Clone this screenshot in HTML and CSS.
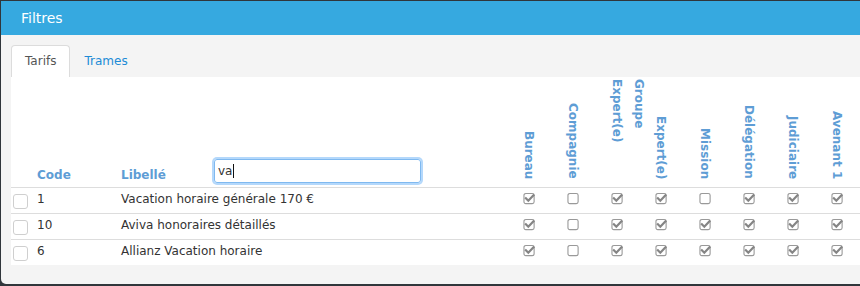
FILE: index.html
```html
<!DOCTYPE html>
<html lang="fr">
<head>
<meta charset="utf-8">
<title>Filtres</title>
<link rel="stylesheet" href="styles.css">
</head>
<body>
<div class="modal">
  <div class="modal-header">Filtres</div>
  <div class="modal-body">
    <div class="tabs">
      <div class="tab active">Tarifs</div>
      <div class="tab">Trames</div>
    </div>
    <div class="tab-content">
      <table class="grid">
        <colgroup>
          <col class="c-sel"><col class="c-code"><col class="c-lib">
          <col class="c-chk"><col class="c-chk"><col class="c-chk"><col class="c-chk">
          <col class="c-chk"><col class="c-chk"><col class="c-chk"><col class="c-chk">
          <col>
        </colgroup>
        <thead>
          <tr>
            <th></th>
            <th class="h-text">Code</th>
            <th class="h-lib">
              <div class="lib-wrap">
                <span class="lib-label">Libellé</span>
                <div class="search" role="textbox">va<span class="caret"></span></div>
              </div>
            </th>
            <th class="vcol"><div class="vlabel">Bureau</div></th>
            <th class="vcol"><div class="vlabel">Compagnie</div></th>
            <th class="vcol"><div class="vlabel wrap">Groupe Expert(e)</div></th>
            <th class="vcol"><div class="vlabel">Expert(e)</div></th>
            <th class="vcol"><div class="vlabel">Mission</div></th>
            <th class="vcol"><div class="vlabel">Délégation</div></th>
            <th class="vcol"><div class="vlabel">Judiciaire</div></th>
            <th class="vcol"><div class="vlabel">Avenant 1</div></th>
            <th></th>
          </tr>
        </thead>
        <tbody>
          <tr>
            <td class="sel"><span class="selbox"></span></td>
            <td>1</td>
            <td>Vacation horaire générale 170 €</td>
            <td class="chk"><svg class="cb" viewBox="0 0 13 13"><rect x="0.5" y="0.5" width="11" height="11" rx="2"/><path d="M2.6 5.8 L5.2 8.4 L10.8 2.4"/></svg></td>
            <td class="chk"><svg class="cb" viewBox="0 0 13 13"><rect x="0.5" y="0.5" width="11" height="11" rx="2"/></svg></td>
            <td class="chk"><svg class="cb" viewBox="0 0 13 13"><rect x="0.5" y="0.5" width="11" height="11" rx="2"/><path d="M2.6 5.8 L5.2 8.4 L10.8 2.4"/></svg></td>
            <td class="chk"><svg class="cb" viewBox="0 0 13 13"><rect x="0.5" y="0.5" width="11" height="11" rx="2"/><path d="M2.6 5.8 L5.2 8.4 L10.8 2.4"/></svg></td>
            <td class="chk"><svg class="cb" viewBox="0 0 13 13"><rect x="0.5" y="0.5" width="11" height="11" rx="2"/></svg></td>
            <td class="chk"><svg class="cb" viewBox="0 0 13 13"><rect x="0.5" y="0.5" width="11" height="11" rx="2"/><path d="M2.6 5.8 L5.2 8.4 L10.8 2.4"/></svg></td>
            <td class="chk"><svg class="cb" viewBox="0 0 13 13"><rect x="0.5" y="0.5" width="11" height="11" rx="2"/><path d="M2.6 5.8 L5.2 8.4 L10.8 2.4"/></svg></td>
            <td class="chk"><svg class="cb" viewBox="0 0 13 13"><rect x="0.5" y="0.5" width="11" height="11" rx="2"/><path d="M2.6 5.8 L5.2 8.4 L10.8 2.4"/></svg></td>
            <td></td>
          </tr>
          <tr>
            <td class="sel"><span class="selbox"></span></td>
            <td>10</td>
            <td>Aviva honoraires détaillés</td>
            <td class="chk"><svg class="cb" viewBox="0 0 13 13"><rect x="0.5" y="0.5" width="11" height="11" rx="2"/><path d="M2.6 5.8 L5.2 8.4 L10.8 2.4"/></svg></td>
            <td class="chk"><svg class="cb" viewBox="0 0 13 13"><rect x="0.5" y="0.5" width="11" height="11" rx="2"/></svg></td>
            <td class="chk"><svg class="cb" viewBox="0 0 13 13"><rect x="0.5" y="0.5" width="11" height="11" rx="2"/><path d="M2.6 5.8 L5.2 8.4 L10.8 2.4"/></svg></td>
            <td class="chk"><svg class="cb" viewBox="0 0 13 13"><rect x="0.5" y="0.5" width="11" height="11" rx="2"/><path d="M2.6 5.8 L5.2 8.4 L10.8 2.4"/></svg></td>
            <td class="chk"><svg class="cb" viewBox="0 0 13 13"><rect x="0.5" y="0.5" width="11" height="11" rx="2"/><path d="M2.6 5.8 L5.2 8.4 L10.8 2.4"/></svg></td>
            <td class="chk"><svg class="cb" viewBox="0 0 13 13"><rect x="0.5" y="0.5" width="11" height="11" rx="2"/><path d="M2.6 5.8 L5.2 8.4 L10.8 2.4"/></svg></td>
            <td class="chk"><svg class="cb" viewBox="0 0 13 13"><rect x="0.5" y="0.5" width="11" height="11" rx="2"/><path d="M2.6 5.8 L5.2 8.4 L10.8 2.4"/></svg></td>
            <td class="chk"><svg class="cb" viewBox="0 0 13 13"><rect x="0.5" y="0.5" width="11" height="11" rx="2"/><path d="M2.6 5.8 L5.2 8.4 L10.8 2.4"/></svg></td>
            <td></td>
          </tr>
          <tr class="last">
            <td class="sel"><span class="selbox"></span></td>
            <td>6</td>
            <td>Allianz Vacation horaire</td>
            <td class="chk"><svg class="cb" viewBox="0 0 13 13"><rect x="0.5" y="0.5" width="11" height="11" rx="2"/><path d="M2.6 5.8 L5.2 8.4 L10.8 2.4"/></svg></td>
            <td class="chk"><svg class="cb" viewBox="0 0 13 13"><rect x="0.5" y="0.5" width="11" height="11" rx="2"/></svg></td>
            <td class="chk"><svg class="cb" viewBox="0 0 13 13"><rect x="0.5" y="0.5" width="11" height="11" rx="2"/><path d="M2.6 5.8 L5.2 8.4 L10.8 2.4"/></svg></td>
            <td class="chk"><svg class="cb" viewBox="0 0 13 13"><rect x="0.5" y="0.5" width="11" height="11" rx="2"/><path d="M2.6 5.8 L5.2 8.4 L10.8 2.4"/></svg></td>
            <td class="chk"><svg class="cb" viewBox="0 0 13 13"><rect x="0.5" y="0.5" width="11" height="11" rx="2"/><path d="M2.6 5.8 L5.2 8.4 L10.8 2.4"/></svg></td>
            <td class="chk"><svg class="cb" viewBox="0 0 13 13"><rect x="0.5" y="0.5" width="11" height="11" rx="2"/><path d="M2.6 5.8 L5.2 8.4 L10.8 2.4"/></svg></td>
            <td class="chk"><svg class="cb" viewBox="0 0 13 13"><rect x="0.5" y="0.5" width="11" height="11" rx="2"/><path d="M2.6 5.8 L5.2 8.4 L10.8 2.4"/></svg></td>
            <td class="chk"><svg class="cb" viewBox="0 0 13 13"><rect x="0.5" y="0.5" width="11" height="11" rx="2"/><path d="M2.6 5.8 L5.2 8.4 L10.8 2.4"/></svg></td>
            <td></td>
          </tr>
        </tbody>
      </table>
    </div>
  </div>
</div>
</body>
</html>
```
FILE: styles.css
```css
html, body {
  margin: 0;
  padding: 0;
}
body {
  background: #30363b;
  overflow: hidden;
  font-family: "DejaVu Sans", "Liberation Sans", sans-serif;
  font-size: 12px;
  color: #333;
  height: 286px;
}
.modal {
  margin: 1px 0 0 1px;
  width: 900px;
  background: #f4f4f4;
  border-radius: 0 0 5px 5px;
  overflow: hidden;
}
.modal-header {
  height: 34px;
  line-height: 34px;
  padding-left: 20px;
  background: #36a9e0;
  color: #fff;
  font-size: 14px;
}
.modal-body {
  padding: 10px 10px 19px 10px;
}
.tabs {
  display: flex;
  height: 32px;
}
.tab {
  padding: 0 13px;
  line-height: 31px;
  border: 1px solid transparent;
  border-bottom: none;
  border-radius: 4px 4px 0 0;
  color: #208bd6;
}
.tab.active {
  background: #fff;
  border-color: #dcdcdc;
  color: #555;
}
.tab-content {
  background: #fff;
}
.grid {
  width: 100%;
  table-layout: fixed;
  border-collapse: separate;
  border-spacing: 0;
}
.c-sel { width: 22px; }
.c-code { width: 84px; }
.c-lib { width: 390px; }
.c-chk { width: 44px; }

.grid th {
  padding: 0;
  vertical-align: bottom;
  text-align: left;
  font-weight: bold;
  color: #5e9dd5;
  border-bottom: 1px solid #ddd;
}
.grid th.h-text {
  padding: 0 4px 4px;
  line-height: 16px;
}
.lib-wrap {
  display: flex;
  align-items: flex-end;
  padding: 0 0 4px 4px;
}
.lib-label {
  flex: 0 0 93px;
  line-height: 16px;
}
.search {
  box-sizing: border-box;
  width: 207px;
  height: 24px;
  padding-left: 3px;
  border: 1px solid #7fb9f0;
  border-radius: 3px;
  box-shadow: 0 0 0 2px #b4d8fb;
  font-weight: normal;
  color: #333;
  line-height: 22px;
  display: flex;
  align-items: center;
}
.caret {
  display: inline-block;
  width: 1px;
  height: 14px;
  margin-left: 1px;
  background: #111;
}
.vlabel {
  writing-mode: vertical-rl;
  height: 100px;
  padding: 2px 0 8px;
  line-height: 22px;
  text-align: end;
  margin: 0 auto;
}
.vlabel.wrap {
  text-align: start;
  margin: 0 0 0 11px;
}
.grid td {
  padding: 3px 4px 5px;
  line-height: 17px;
  border-bottom: 1px solid #ddd;
  white-space: nowrap;
  vertical-align: top;
}
.grid tr.last td {
  border-bottom: none;
}
.grid td.sel {
  padding: 6px 0 4px 2px;
}
.selbox {
  display: block;
  width: 13px;
  height: 13px;
  border: 1px solid #cfcfcf;
  border-radius: 3px;
}
.grid td.chk {
  padding: 5px 0 8px;
}
.cb {
  display: block;
  width: 13px;
  height: 12px;
  margin: 0 auto;
  overflow: visible;
}
.cb rect {
  fill: #fff;
  stroke: #999;
  stroke-width: 1.2;
}
.cb path {
  fill: none;
  stroke: #858585;
  stroke-width: 2.4;
  stroke-linecap: square;
}
```
